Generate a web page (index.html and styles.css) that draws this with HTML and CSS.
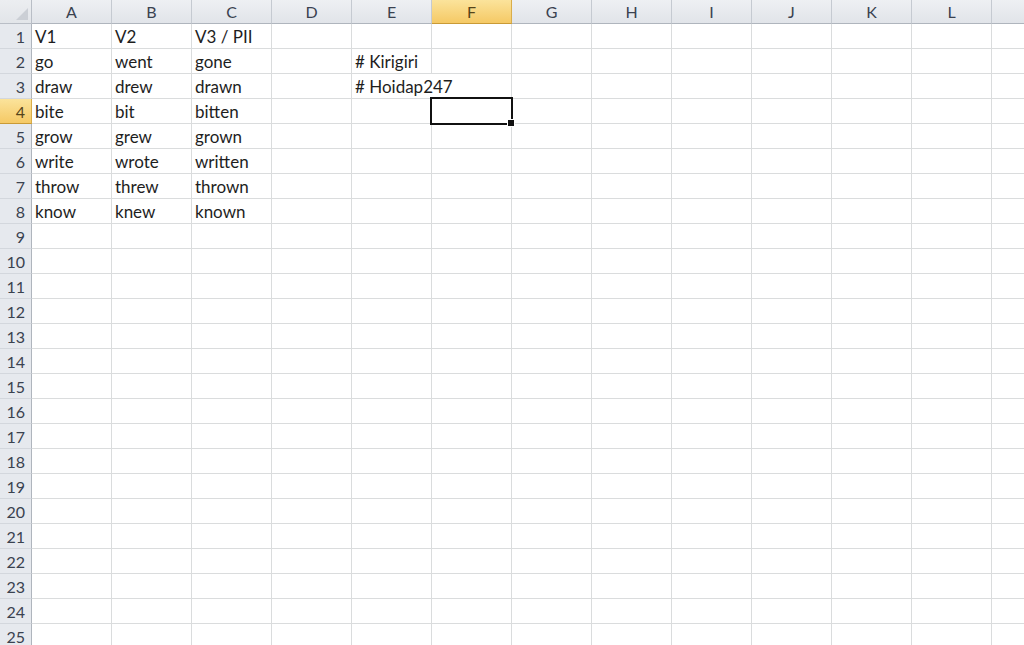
FILE: index.html
```html
<!DOCTYPE html>
<html lang="en">
<head>
    <meta charset="UTF-8">
    <meta name="viewport" content="width=device-width, initial-scale=1.0">
    <title>Book1 - Sheet1</title>
    <link rel="stylesheet" href="styles.css">
</head>
<body>
    <div class="sheet" id="sheet"></div>

    <script>
        const sheet = document.getElementById('sheet');
        const columns = 'ABCDEFGHIJKL'.split('');
        const rowCount = 25;
        const activeCol = 'F';
        const activeRow = 4;

        const data = {
            A1: 'V1', B1: 'V2', C1: 'V3 / PII',
            A2: 'go', B2: 'went', C2: 'gone', E2: '# Kirigiri',
            A3: 'draw', B3: 'drew', C3: 'drawn', E3: '# Hoidap247',
            A4: 'bite', B4: 'bit', C4: 'bitten',
            A5: 'grow', B5: 'grew', C5: 'grown',
            A6: 'write', B6: 'wrote', C6: 'written',
            A7: 'throw', B7: 'threw', C7: 'thrown',
            A8: 'know', B8: 'knew', C8: 'known'
        };

        // text that runs over into the next empty cell
        const overflow = ['E3'];

        function addCell(className, text) {
            const cell = document.createElement('div');
            cell.className = className;
            if (text) cell.textContent = text;
            sheet.appendChild(cell);
            return cell;
        }

        addCell('corner');
        columns.forEach(col => {
            addCell(col === activeCol ? 'col-head active' : 'col-head', col);
        });
        // partly visible column past the window edge
        addCell('col-head');

        for (let r = 1; r <= rowCount; r++) {
            addCell(r === activeRow ? 'row-head active' : 'row-head', r);
            columns.forEach(col => {
                const key = col + r;
                let cls = 'cell';
                if (overflow.includes(key)) cls += ' spill';
                if (col === activeCol && r === activeRow) cls += ' selected';
                addCell(cls, data[key]);
            });
            addCell('cell');
        }
    </script>
</body>
</html>
```

FILE: styles.css
```css
* {
    box-sizing: border-box;
}

body {
    margin: 0;
    background-color: #fff;
    overflow: hidden;
    font-family: Lato, "Open Sans", sans-serif;
}

.sheet {
    display: grid;
    grid-template-columns: 32px repeat(13, 80px);
    grid-template-rows: 24px repeat(25, 25px);
    width: max-content;
}

.corner {
    position: relative;
    background: linear-gradient(#eceef1, #e2e5e9);
    border-right: 1px solid #b9bec6;
    border-bottom: 1px solid #b9bec6;
}

.corner::after {
    content: "";
    position: absolute;
    right: 3px;
    bottom: 3px;
    width: 0;
    height: 0;
    border-left: 12px solid transparent;
    border-bottom: 12px solid #cbcfd5;
}

.col-head,
.row-head {
    display: flex;
    align-items: center;
    justify-content: center;
    font-size: 16px;
    color: #3a4250;
    background: linear-gradient(#eef0f3, #e1e4e9);
    border-right: 1px solid #c5cad1;
    border-bottom: 1px solid #c5cad1;
}

.col-head {
    border-bottom-color: #afb5bd;
}

.row-head {
    justify-content: flex-end;
    padding-right: 6px;
    background: #e6e9ee;
    border-right-color: #afb5bd;
    border-bottom-color: #d3d7dd;
}

.col-head.active,
.row-head.active {
    color: #54441a;
    background: linear-gradient(#fbe39b, #f5c965);
    border-right-color: #d9ad4a;
    border-bottom-color: #c99a36;
}

.cell {
    display: flex;
    align-items: center;
    padding-left: 3px;
    font-size: 17px;
    color: #1e1e1e;
    white-space: nowrap;
    border-right: 1px solid #dadcdd;
    border-bottom: 1px solid #dadcdd;
}

.cell.spill {
    border-right-color: transparent;
    overflow: visible;
}

.cell.selected {
    position: relative;
}

.cell.selected::before {
    content: "";
    position: absolute;
    left: -2px;
    top: -2px;
    right: -2px;
    bottom: -2px;
    border: 2px solid #111;
}

.cell.selected::after {
    content: "";
    position: absolute;
    right: -4px;
    bottom: -4px;
    width: 6px;
    height: 6px;
    background: #111;
    border: 1px solid #fff;
}
```
